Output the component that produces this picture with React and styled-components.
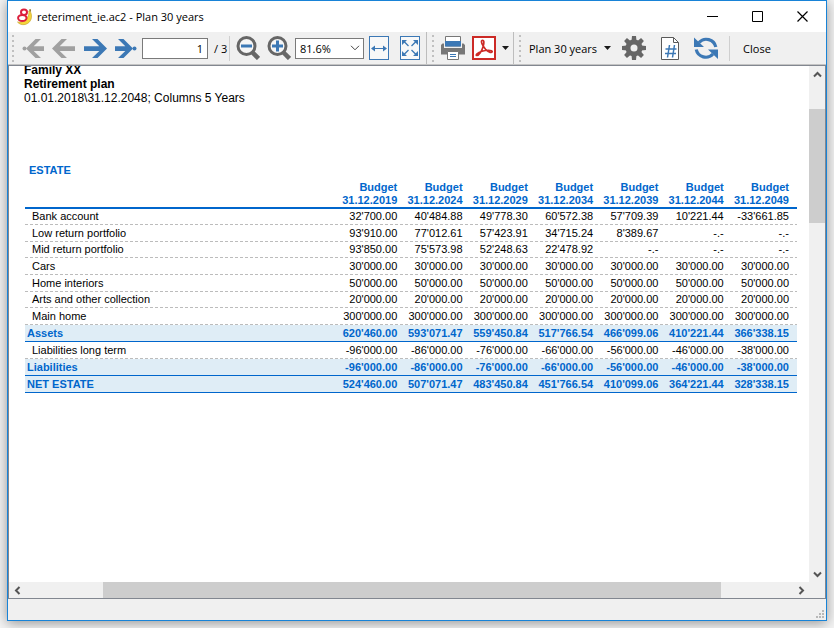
import React from 'react';
import styled, { createGlobalStyle, css } from 'styled-components';

const BLUE = '#3c78b5';
const GRAY = '#666666';
const INK_BLUE = '#0066cc';

const GlobalStyle = createGlobalStyle`
  *, *::before, *::after { box-sizing: border-box; }
  body { margin: 0; background: #f0f0f0; overflow: hidden; }
  button, input, select { font: inherit; color: inherit; }
`;

const Desktop = styled.div`
  min-height: 100vh;
  display: flex;
  padding: 0 7px 7px;
  background: #f4f4f4;
  font-family: "Open Sans", "Noto Sans", sans-serif;
  font-size: 11px;
  color: #000;
`;

const Window = styled.main`
  flex: 1;
  min-width: 0;
  display: flex;
  flex-direction: column;
  border: 1px solid #1883d7;
  background: #f0f0f0;
  box-shadow: 0 2px 12px rgba(0, 0, 0, 0.4);
`;

const TitleBar = styled.header`
  display: flex;
  align-items: center;
  height: 31px;
  padding: 0 1px 0 8px;
  background: #fff;
`;

const Title = styled.h1`
  flex: 1;
  margin: 0 0 0 4px;
  font-size: 11px;
  font-weight: 400;
  line-height: 16px;
`;

const PlainButton = styled.button`
  display: inline-flex;
  align-items: center;
  justify-content: center;
  flex: none;
  padding: 0;
  border: 0;
  background: transparent;
`;

const CaptionButton = styled(PlainButton)`
  width: 45px;
  height: 30px;
`;

const ToolBar = styled.div`
  display: flex;
  height: 33px;
  border-bottom: 1px solid #c4c4c4;
  background: #f0f0f0;
`;

const ToolGroup = styled.div`
  display: flex;
  align-items: center;
  padding: 0 4px;
  ${(p) => p.$divided && css`
    border-right: 1px solid #bdbdbd;
    margin-right: 1px;
  `}
`;

const Grip = styled.span`
  width: 3px;
  height: 27px;
  margin-right: 6px;
  background: radial-gradient(circle at 1px 1px, #c0c0c0 1px, transparent 1px) 0 0 / 3px 5px;
`;

const Cluster = styled.div`
  display: flex;
  gap: ${(p) => p.$gap || 7}px;
`;

const ToolButton = styled(PlainButton)`
  width: 24px;
  height: 24px;
`;

const PageInput = styled.input`
  width: 66px;
  height: 21px;
  margin: 0 6px 0 4px;
  padding: 0 4px;
  border: 1px solid #7a7a7a;
  border-radius: 0;
  background: #fff;
  text-align: right;
`;

const PageCount = styled.span`
  width: 15px;
  white-space: nowrap;
`;

const Separator = styled.span`
  width: 1px;
  height: 25px;
  margin: 0 ${(p) => p.$after || 6}px 0 ${(p) => p.$before || 0}px;
  background: #cfcfcf;
`;

const ZoomField = styled.div`
  display: grid;
  align-items: center;
  width: 69px;
  margin: 0 3px 0 4px;
  & > * { grid-area: 1 / 1; }
  & > svg { justify-self: end; margin-right: 4px; pointer-events: none; }
`;

const ZoomSelect = styled.select`
  appearance: none;
  width: 100%;
  height: 21px;
  padding: 0 4px;
  border: 1px solid #7a7a7a;
  border-radius: 0;
  background: #fff;
`;

const CaretButton = styled(PlainButton)`
  width: 7px;
  height: 24px;
  margin-left: 6px;
`;

const TextButton = styled(PlainButton)`
  height: 24px;
  gap: 7px;
  margin: 0 11px 0 1px;
  white-space: nowrap;
`;

const Viewer = styled.section`
  flex: 1;
  display: grid;
  grid-template-columns: minmax(0, 1fr) 16px;
  grid-template-rows: minmax(0, 1fr) 16px;
  border: 1px solid #828790;
  background: #f0f0f0;
`;

const Page = styled.article`
  overflow: hidden;
  padding: 0 12px 0 15px;
  background: #fff;
  font-family: "Liberation Sans", Arial, sans-serif;
`;

const Heading = styled.div`
  margin-top: -3px;
  font-size: 12px;
  line-height: 14px;
  & > * { margin: 0; font-size: 12px; }
`;

const TableFrame = styled.div`
  margin: 59px 0 0 1px;
`;

const Table = styled.table`
  width: 100%;
  table-layout: fixed;
  border-collapse: separate;
  border-spacing: 0;
  font-size: 11px;
  line-height: 13px;
  white-space: nowrap;
  caption {
    height: 17px;
    padding-left: 4px;
    text-align: left;
    font-weight: 700;
    color: ${INK_BLUE};
  }
`;

const LabelCol = styled.col`
  width: 315px;
`;

const HeadCell = styled.th`
  height: 28px;
  padding: 0 8px 0 0;
  border-bottom: 2px solid ${INK_BLUE};
  color: ${INK_BLUE};
  text-align: right;
  vertical-align: top;
`;

const Row = styled.tr`
  height: ${(p) => (p.$short ? 16 : 17)}px;
  background: repeating-linear-gradient(90deg, #bcbcbc 0 3px, transparent 3px 5px) left bottom / 100% 1px no-repeat;
  & > * {
    padding: 0 8px 1px 0;
    text-align: right;
    font-weight: 400;
    vertical-align: middle;
  }
  & > th { text-align: left; padding-left: 7px; }
  ${(p) => p.$total && css`
    color: ${INK_BLUE};
    background: #dfedf6;
    & > * { font-weight: 700; padding-bottom: 0; border-bottom: 1px solid ${INK_BLUE}; }
    & > th { padding-left: 2px; }
  `}
`;

const ScrollBar = styled.div`
  display: flex;
  flex-direction: ${(p) => (p.$vertical ? 'column' : 'row')};
  background: #f0f0f0;
`;

const ScrollButton = styled(PlainButton)`
  width: 16px;
  height: 16px;
`;

const ScrollSpace = styled.span`
  flex: ${(p) => p.$size} 1 0;
  background: ${(p) => (p.$thumb ? '#cdcdcd' : 'transparent')};
`;

const StatusBar = styled.footer`
  display: flex;
  align-items: flex-end;
  justify-content: flex-end;
  height: 21px;
  padding: 2px;
`;

const Svg = ({ w = 24, h = 24, children }) => (
  <svg width={w} height={h} viewBox={`0 0 ${w} ${h}`} fill="none" aria-hidden="true">{children}</svg>
);

const Logo = () => (
  <Svg w={17} h={18}>
    <path d="M14 3c3 5 1.500 12-5 13.500-3 .6-6-.5-7.500-2.500 4 1 8-1 10-4.500 1.300-2.200 1.700-4.500 1.300-6.500z" fill="#f5d63c" stroke="#c9a62b" strokeWidth=".7" />
    <path d="M13.300 2.800l.2-1.800 1.300.3.200 2.400z" fill="#8a742a" />
    <ellipse cx="8" cy="4.300" rx="3" ry="2.700" stroke="#dc1f3c" strokeWidth="2" fill="#fff" />
    <ellipse cx="6.300" cy="10" rx="4.200" ry="3" stroke="#dc1f3c" strokeWidth="2" fill="#fff" />
  </Svg>
);

const FirstIcon = () => (
  <Svg>
    <path d="M5 12.500L14.500 3H20l-7.300 7.300H23v4.600H12.700L20 22h-5.500z" fill="#a0a0a0" />
    <circle cx="3.500" cy="12.500" r="2" fill="#a0a0a0" />
  </Svg>
);
const PrevIcon = () => (
  <Svg><path d="M0 12.500L9.500 3H15l-7.300 7.300H23v4.600H7.700L15 22H9.500z" fill="#a0a0a0" /></Svg>
);
const NextIcon = () => (
  <Svg><path d="M24 12.500L14.500 3H9l7.300 7.300H1v4.600h15.300L9 22h5.500z" fill={BLUE} /></Svg>
);
const LastIcon = () => (
  <Svg>
    <path d="M19 12.500L9.500 3H4l7.300 7.300H1v4.600h10.300L4 22h5.500z" fill={BLUE} />
    <circle cx="20.500" cy="12.500" r="2" fill={BLUE} />
  </Svg>
);
const ZoomIcon = ({ plus }) => (
  <Svg>
    <circle cx="10.500" cy="10" r="8.500" stroke={GRAY} strokeWidth="3" fill="#f6f6f6" />
    <path d="M15.500 15.500L22.500 22.500" stroke={GRAY} strokeWidth="4.500" />
    <path d="M5 10h11" stroke={BLUE} strokeWidth="3" />
    {plus && <path d="M10.500 4.500v11" stroke={BLUE} strokeWidth="3" />}
  </Svg>
);
const FitWidthIcon = () => (
  <Svg>
    <rect x="2.500" y=".5" width="19" height="23" fill="#f8f8f8" stroke={BLUE} />
    <path d="M5 12.500h14" stroke={BLUE} />
    <path d="M4 12.500l4-3v6zM20 12.500l-4-3v6z" fill={BLUE} />
  </Svg>
);
const FitPageIcon = () => (
  <Svg>
    <rect x="2.500" y=".5" width="19" height="23" fill="#f8f8f8" stroke={BLUE} />
    <path d="M6 5.500l4.500 4.500M18 5.500l-4.500 4.500M6 18.500l4.500-4.500M18 18.500l-4.500-4.500" stroke={BLUE} strokeWidth="1.300" />
    <path d="M4 4h5L4 9zM20 4h-5L20 9zM4 20h5L4 15zM20 20h-5L20 15z" fill={BLUE} />
  </Svg>
);
const PrintIcon = () => (
  <Svg>
    <path d="M4.500.5h15V10h-15z" fill="#fff" stroke="#777" />
    <path d="M4 5h16v5.500H4z" fill={BLUE} />
    <path d="M1.500 7.500H3v4.500h18V7.500h1.500L24 9v9.500H0V9z" fill="#777" />
    <path d="M6.500 15.500h11v8h-11z" fill="#fff" stroke="#777" />
    <path d="M9 18.500h6M9 20.500h6" stroke={BLUE} />
  </Svg>
);
const PdfIcon = () => (
  <Svg>
    <rect x="1" y="1" width="22" height="22" fill="#fff" stroke="#cc2a26" strokeWidth="2" />
    <path d="M10 4.500c2.300-1 2.300 2.500 1 6.500-1.300 4.200-4 8.500-6 8.500-2.200-.2.500-3 5-4.300 4-1.100 9.700-1.500 10.200.3.300 1.600-3.500 1.200-6.500-2C11 10.500 8.300 5.200 10 4.500z" stroke="#cc2a26" strokeWidth="1.700" />
  </Svg>
);
const Caret = () => <Svg w={7} h={4}><path d="M0 0h7L3.500 4z" fill="#1a1a1a" /></Svg>;

const GearIcon = () => (
  <Svg>
    <g fill="#666">
      {[0, 45, 90, 135].map((a) => (
        <path key={a} d="M10 0h4l.5 5v14l-.5 5h-4l-.5-5V5z" transform={`rotate(${a} 12 12)`} />
      ))}
      <circle cx="12" cy="12" r="8.500" />
    </g>
    <circle cx="12" cy="12" r="3.500" fill="#f0f0f0" />
  </Svg>
);
const NumberPageIcon = () => (
  <Svg>
    <path d="M3.500 1.500h12l5 5v17h-17z" fill="#fff" stroke="#5a5a5a" />
    <path d="M15.500 1.500v5h5" stroke="#5a5a5a" />
    <path d="M11.500 9L9.500 21.500M16.500 9l-2 12.500M7.500 13h11M7 17.500h11" stroke={BLUE} strokeWidth="1.500" />
  </Svg>
);
const RefreshIcon = () => (
  <Svg>
    <path d="M5 6.500A9.800 9.800 0 0 1 21.800 11M19 18A9.800 9.800 0 0 1 2.200 13.500" stroke={BLUE} strokeWidth="3.200" />
    <path d="M0 1.500L10 11H0zM24 23L14 13.500h10z" fill={BLUE} />
  </Svg>
);

const Arrow = ({ d }) => (
  <Svg w={9} h={9}><path d={d} stroke="#555" strokeWidth="2" /></Svg>
);

const years = [2019, 2024, 2029, 2034, 2039, 2044, 2049];
const rows = [
  { label: 'Bank account', short: true, values: ["32'700.00", "40'484.88", "49'778.30", "60'572.38", "57'709.39", "10'221.44", "-33'661.85"] },
  { label: 'Low return portfolio', values: ["93'910.00", "77'012.61", "57'423.91", "34'715.24", "8'389.67", '-.-', '-.-'] },
  { label: 'Mid return portfolio', short: true, values: ["93'850.00", "75'573.98", "52'248.63", "22'478.92", '-.-', '-.-', '-.-'] },
  { label: 'Cars', values: Array(7).fill("30'000.00") },
  { label: 'Home interiors', values: Array(7).fill("50'000.00") },
  { label: 'Arts and other collection', short: true, values: Array(7).fill("20'000.00") },
  { label: 'Main home', values: Array(7).fill("300'000.00") },
  { label: 'Assets', total: true, values: ["620'460.00", "593'071.47", "559'450.84", "517'766.54", "466'099.06", "410'221.44", "366'338.15"] },
  { label: 'Liabilities long term', values: ["-96'000.00", "-86'000.00", "-76'000.00", "-66'000.00", "-56'000.00", "-46'000.00", "-38'000.00"] },
  { label: 'Liabilities', total: true, values: ["-96'000.00", "-86'000.00", "-76'000.00", "-66'000.00", "-56'000.00", "-46'000.00", "-38'000.00"] },
  { label: 'NET ESTATE', total: true, values: ["524'460.00", "507'071.47", "483'450.84", "451'766.54", "410'099.06", "364'221.44", "328'338.15"] },
];

const Tool = ({ label, children }) => <ToolButton type="button" aria-label={label}>{children}</ToolButton>;

export default function App() {
  return (
    <Desktop>
      <GlobalStyle />
      <Window>
        <TitleBar>
          <Logo />
          <Title>reteriment_ie.ac2 - Plan 30 years</Title>
          <CaptionButton type="button" aria-label="Minimize">
            <Svg w={11} h={11}><path d="M0 5.500h11" stroke="#000" /></Svg>
          </CaptionButton>
          <CaptionButton type="button" aria-label="Maximize">
            <Svg w={11} h={11}><path d="M.5.5h10v10H.5z" stroke="#000" /></Svg>
          </CaptionButton>
          <CaptionButton type="button" aria-label="Close window">
            <Svg w={11} h={11}><path d="M.5.5l10 10M10.500.5l-10 10" stroke="#000" strokeWidth="1.200" /></Svg>
          </CaptionButton>
        </TitleBar>

        <ToolBar role="toolbar">
          <ToolGroup $divided>
            <Grip />
            <Cluster>
              <Tool label="First page"><FirstIcon /></Tool>
              <Tool label="Previous page"><PrevIcon /></Tool>
              <Tool label="Next page"><NextIcon /></Tool>
              <Tool label="Last page"><LastIcon /></Tool>
            </Cluster>
            <PageInput aria-label="Page number" defaultValue="1" />
            <PageCount>/ 3</PageCount>
            <Separator />
            <Cluster>
              <Tool label="Zoom out"><ZoomIcon /></Tool>
              <Tool label="Zoom in"><ZoomIcon plus /></Tool>
            </Cluster>
            <ZoomField>
              <ZoomSelect aria-label="Zoom level" defaultValue="81.6%">
                <option>81.6%</option>
              </ZoomSelect>
              <Svg w={10} h={6}><path d="M1 .8l4 4 4-4" stroke="#444" /></Svg>
            </ZoomField>
            <Cluster>
              <Tool label="Fit width"><FitWidthIcon /></Tool>
              <Tool label="Fit page"><FitPageIcon /></Tool>
            </Cluster>
          </ToolGroup>
          <ToolGroup $divided>
            <Grip />
            <Cluster>
              <Tool label="Print"><PrintIcon /></Tool>
              <Tool label="Export to PDF"><PdfIcon /></Tool>
            </Cluster>
            <CaretButton type="button" aria-label="Export options"><Caret /></CaretButton>
          </ToolGroup>
          <ToolGroup>
            <Grip />
            <TextButton type="button">Plan 30 years <Caret /></TextButton>
            <Cluster $gap={12}>
              <Tool label="Settings"><GearIcon /></Tool>
              <Tool label="Page numbering"><NumberPageIcon /></Tool>
              <Tool label="Refresh"><RefreshIcon /></Tool>
            </Cluster>
            <Separator $before={11} $after={12} />
            <TextButton type="button">Close</TextButton>
          </ToolGroup>
        </ToolBar>

        <Viewer>
          <Page>
            <Heading>
              <h2>Family XX</h2>
              <h3>Retirement plan</h3>
              <p>01.01.2018\31.12.2048; Columns 5 Years</p>
            </Heading>
            <TableFrame>
              <Table>
                <caption>ESTATE</caption>
                <colgroup>
                  <LabelCol />
                  {years.map((y) => <col key={y} />)}
                </colgroup>
                <thead>
                  <tr>
                    <HeadCell as="td" />
                    {years.map((y) => <HeadCell key={y} scope="col">Budget<br />31.12.{y}</HeadCell>)}
                  </tr>
                </thead>
                <tbody>
                  {rows.map((r) => (
                    <Row key={r.label} $short={r.short} $total={r.total}>
                      <th scope="row">{r.label}</th>
                      {r.values.map((v, i) => <td key={years[i]}>{v}</td>)}
                    </Row>
                  ))}
                </tbody>
              </Table>
            </TableFrame>
          </Page>
          <ScrollBar $vertical>
            <ScrollButton type="button" aria-label="Scroll up"><Arrow d="M1 6.500l3.500-3.500L8 6.500" /></ScrollButton>
            <ScrollSpace $size={27} />
            <ScrollSpace $thumb $size={114} />
            <ScrollSpace $size={343} />
            <ScrollButton type="button" aria-label="Scroll down"><Arrow d="M1 2.500L4.500 6 8 2.500" /></ScrollButton>
          </ScrollBar>
          <ScrollBar>
            <ScrollButton type="button" aria-label="Scroll left"><Arrow d="M6.500 1L3 4.500 6.500 8" /></ScrollButton>
            <ScrollSpace $size={78} />
            <ScrollSpace $thumb $size={618} />
            <ScrollSpace $size={72} />
            <ScrollButton type="button" aria-label="Scroll right"><Arrow d="M2.500 1L6 4.500 2.500 8" /></ScrollButton>
          </ScrollBar>
        </Viewer>
        <StatusBar>
          <Svg w={8} h={8}>
            <path d="M6 0h2v2H6zM3 3h2v2H3zM6 3h2v2H6zM0 6h2v2H0zM3 6h2v2H3zM6 6h2v2H6z" fill="#b8b8b8" />
          </Svg>
        </StatusBar>
      </Window>
    </Desktop>
  );
}
